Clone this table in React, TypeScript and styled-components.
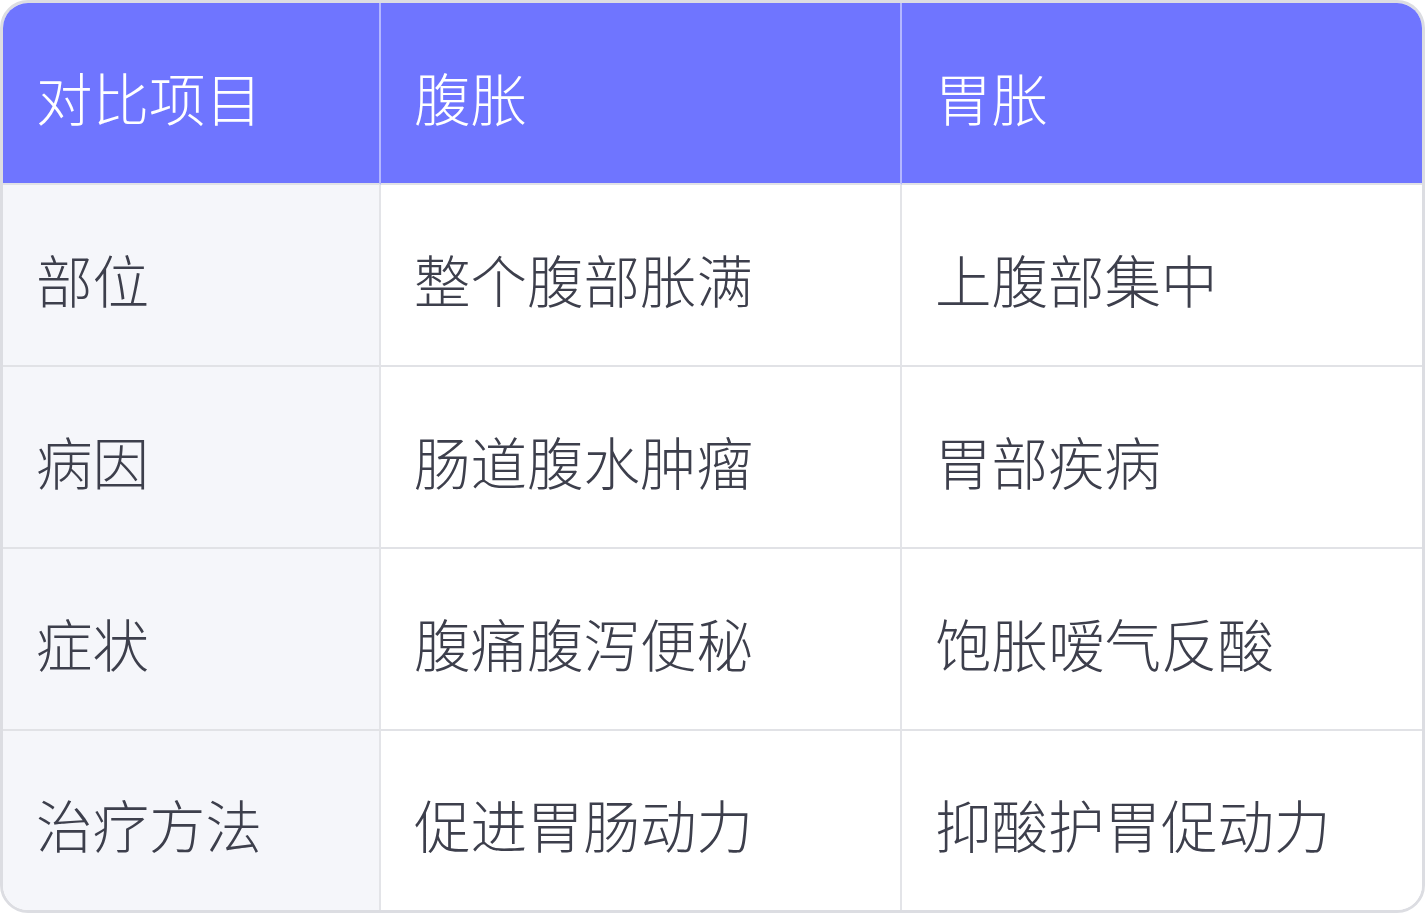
import React from "react";
import styled, { createGlobalStyle } from "styled-components";

const Global = createGlobalStyle`
  html, body { margin: 0; padding: 0; background: #ffffff; }
  body { font-family: "Noto Sans CJK SC", "Noto Sans", sans-serif; }
`;

const Table = styled.div`
  box-sizing: border-box;
  width: 1425px;
  height: 913px;
  border: 3px solid #dcdde2;
  border-radius: 28px;
  overflow: hidden;
  display: grid;
  grid-template-columns: 378px 521px 1fr;
  grid-template-rows: 182px 182px 182px 182px 1fr;
  background: #ffffff;
`;

const Cell = styled.div<{ $head?: boolean; $first?: boolean; $lastCol?: boolean; $lastRow?: boolean }>`
  box-sizing: border-box;
  display: flex;
  align-items: center;
  padding: 5px 0 0 33px;
  font-size: 56.5px;
  font-weight: 300;
  white-space: nowrap;
  color: ${(p) => (p.$head ? "#ffffff" : "#3d3f4c")};
  background: ${(p) => (p.$head ? "#6f75ff" : p.$first ? "#f5f6fa" : "#ffffff")};
  border-right: ${(p) => (p.$lastCol ? "none" : p.$head ? "2px solid #b4b7ff" : "2px solid #e3e4e8")};
  border-bottom: ${(p) => (p.$lastRow ? "none" : "2px solid #e1e2e6")};
`;

const rows: string[][] = [
  ["部位", "整个腹部胀满", "上腹部集中"],
  ["病因", "肠道腹水肿瘤", "胃部疾病"],
  ["症状", "腹痛腹泻便秘", "饱胀嗳气反酸"],
  ["治疗方法", "促进胃肠动力", "抑酸护胃促动力"],
];

const head = ["对比项目", "腹胀", "胃胀"];

export default function App() {
  return (
    <>
      <Global />
      <Table>
        {head.map((h, i) => (
          <Cell key={h} $head $lastCol={i === 2}>
            {h}
          </Cell>
        ))}
        {rows.map((r, ri) =>
          r.map((c, ci) => (
            <Cell
              key={`${ri}-${ci}`}
              $first={ci === 0}
              $lastCol={ci === 2}
              $lastRow={ri === rows.length - 1}
            >
              {c}
            </Cell>
          ))
        )}
      </Table>
    </>
  );
}
